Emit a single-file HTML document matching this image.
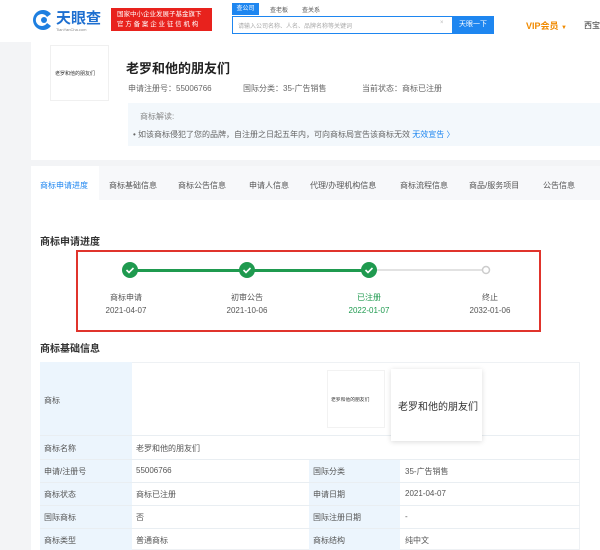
<!DOCTYPE html>
<html><head><meta charset="utf-8"><style>
*{margin:0;padding:0;box-sizing:border-box}
body{width:600px;height:550px;overflow:hidden;background:#f3f4f6;font-family:"Liberation Sans","Noto Sans CJK SC",sans-serif;color:#555;font-size:8px;position:relative}
.a{position:absolute;white-space:nowrap}
</style></head><body>
<div class="a" style="left:0;top:0;width:600px;height:42px;background:#fff"></div>
<svg class="a" style="left:31px;top:8px" width="24" height="24" viewBox="0 0 24 24"><path d="M20 6A10 10 0 1 0 20 18L16 15A6 6 0 1 1 16 9Z" fill="#1e7fe0"/><circle cx="13" cy="12" r="3" fill="#1e7fe0"/></svg>
<div class="a" style="left:56px;top:7px;font-size:15px;font-weight:bold;color:#1e6fd0">天眼查</div>
<div class="a" style="left:56px;top:27px;font-size:4px;color:#888">TianYanCha.com</div>
<div class="a" style="left:111px;top:8px;width:101px;height:23px;background:#e8221d;color:#fff;font-size:6.5px;padding:2px 6px;line-height:10px">国家中小企业发展子基金旗下<br>官 方 备 案 企 业 征 信 机 构</div>
<div class="a" style="left:232px;top:3px;width:27px;height:12px;background:#1e86f0;color:#fff;font-size:6px;text-align:center;line-height:12px">查公司</div>
<div class="a" style="left:270px;top:5px;font-size:6px;color:#555">查老板</div>
<div class="a" style="left:302px;top:5px;font-size:6px;color:#555">查关系</div>
<div class="a" style="left:232px;top:16px;width:262px;height:18px;border:1px solid #1e86f0;background:#fff"></div>
<div class="a" style="left:238px;top:21px;font-size:6px;color:#aaa">请输入公司名称、人名、品牌名称等关键词</div>
<div class="a" style="left:440px;top:20px;font-size:6px;color:#bbb">×</div>
<div class="a" style="left:452px;top:16px;width:42px;height:18px;background:#1e86f0;color:#fff;font-size:7px;text-align:center;line-height:18px">天眼一下</div>
<div class="a" style="left:526px;top:19px;font-size:9px;font-weight:bold;color:#f08a00">VIP会员 <span style="font-size:6px">▼</span></div>
<div class="a" style="left:584px;top:20px;font-size:8px;color:#333">西宝</div>

<div class="a" style="left:31px;top:42px;width:569px;height:118px;background:#fff"></div>
<div class="a" style="left:50px;top:45px;width:59px;height:56px;border:1px solid #f0f0f0"></div>
<div class="a" style="left:55px;top:70px;font-size:5px;color:#333">老罗和他的朋友们</div>
<div class="a" style="left:126px;top:58px;font-size:13px;font-weight:bold;color:#222">老罗和他的朋友们</div>
<div class="a" style="left:128px;top:83px;color:#666">申请注册号：55006766</div>
<div class="a" style="left:243px;top:83px;color:#666">国际分类：35-广告销售</div>
<div class="a" style="left:362px;top:83px;color:#666">当前状态：商标已注册</div>
<div class="a" style="left:128px;top:103px;width:472px;height:43px;background:#f3f8fc"></div>
<div class="a" style="left:140px;top:111px;color:#888">商标解读:</div>
<div class="a" style="left:133px;top:129px;color:#666">• 如该商标侵犯了您的品牌，自注册之日起五年内，可向商标局宣告该商标无效 <span style="color:#1e86f0">无效宣告 〉</span></div>

<div class="a" style="left:31px;top:166px;width:569px;height:384px;background:#fff"></div>
<div class="a" style="left:31px;top:166px;width:569px;height:34px;background:#f7f8fa"></div>
<div class="a" style="left:31px;top:166px;width:68px;height:34px;background:#fff"></div>
<div class="a" style="top:180px;left:40px;color:#1e86f0">商标申请进度</div>
<div class="a" style="top:180px;left:109px">商标基础信息</div>
<div class="a" style="top:180px;left:178px">商标公告信息</div>
<div class="a" style="top:180px;left:249px">申请人信息</div>
<div class="a" style="top:180px;left:310px">代理/办理机构信息</div>
<div class="a" style="top:180px;left:400px">商标流程信息</div>
<div class="a" style="top:180px;left:469px">商品/服务项目</div>
<div class="a" style="top:180px;left:543px">公告信息</div>

<div class="a" style="left:40px;top:233px;font-size:10px;font-weight:bold;color:#333">商标申请进度</div>
<div class="a" style="left:76px;top:250px;width:465px;height:82px;border:2px solid #e0342c"></div>
<div class="a" style="left:130px;top:269px;width:239px;height:3px;background:#1f9a4f"></div>
<div class="a" style="left:369px;top:269px;width:117px;height:2px;background:#e2e2e2"></div>
<svg class="a" style="left:0;top:0" width="600" height="550">
<g fill="#1f9a4f"><circle cx="130" cy="270" r="8"/><circle cx="247" cy="270" r="8"/><circle cx="369" cy="270" r="8"/></g>
<g fill="none" stroke="#fff" stroke-width="1.6"><path d="M126.5 270l2.5 2.5 4.5-4.5"/><path d="M243.5 270l2.5 2.5 4.5-4.5"/><path d="M365.5 270l2.5 2.5 4.5-4.5"/></g>
<circle cx="486" cy="270" r="3.5" fill="#fff" stroke="#ccc" stroke-width="1.5"/>
</svg>
<div class="a" style="left:96px;top:291px;width:60px;text-align:center;line-height:13px">商标申请<br>2021-04-07</div>
<div class="a" style="left:217px;top:291px;width:60px;text-align:center;line-height:13px">初审公告<br>2021-10-06</div>
<div class="a" style="left:339px;top:291px;width:60px;text-align:center;line-height:13px;color:#1f9a4f">已注册<br>2022-01-07</div>
<div class="a" style="left:460px;top:291px;width:60px;text-align:center;line-height:13px">终止<br>2032-01-06</div>

<div class="a" style="left:40px;top:340px;font-size:10px;font-weight:bold;color:#333">商标基础信息</div>
<div class="a" style="left:40px;top:362px;width:540px;height:188px;border:1px solid #eef1f4;background:#fff"></div>
<div class="a" style="left:40px;top:362px;width:92px;height:188px;background:#ecf5fd"></div>
<div class="a" style="left:309px;top:459px;width:91px;height:91px;background:#ecf5fd"></div>
<div class="a" style="left:40px;top:435px;width:540px;border-top:1px solid #e9eef2"></div>
<div class="a" style="left:40px;top:459px;width:540px;border-top:1px solid #e9eef2"></div>
<div class="a" style="left:40px;top:482px;width:540px;border-top:1px solid #e9eef2"></div>
<div class="a" style="left:40px;top:505px;width:540px;border-top:1px solid #e9eef2"></div>
<div class="a" style="left:40px;top:528px;width:540px;border-top:1px solid #e9eef2"></div>
<div class="a" style="left:44px;top:395px">商标</div>
<div class="a" style="left:327px;top:370px;width:58px;height:58px;border:1px solid #f2f2f2;background:#fff"></div>
<div class="a" style="left:331px;top:396px;font-size:4.8px;color:#333">老罗和他的朋友们</div>
<div class="a" style="left:391px;top:369px;width:91px;height:72px;background:#fff;box-shadow:0 1px 5px rgba(0,0,0,.15)"></div>
<div class="a" style="left:398px;top:398px;font-size:10px;color:#333">老罗和他的朋友们</div>
<div class="a" style="left:44px;top:443px">商标名称</div><div class="a" style="left:136px;top:443px">老罗和他的朋友们</div>
<div class="a" style="left:44px;top:466px">申请/注册号</div><div class="a" style="left:136px;top:466px">55006766</div><div class="a" style="left:313px;top:466px">国际分类</div><div class="a" style="left:405px;top:466px">35-广告销售</div>
<div class="a" style="left:44px;top:489px">商标状态</div><div class="a" style="left:136px;top:489px">商标已注册</div><div class="a" style="left:313px;top:489px">申请日期</div><div class="a" style="left:405px;top:489px">2021-04-07</div>
<div class="a" style="left:44px;top:512px">国际商标</div><div class="a" style="left:136px;top:512px">否</div><div class="a" style="left:313px;top:512px">国际注册日期</div><div class="a" style="left:405px;top:512px">-</div>
<div class="a" style="left:44px;top:535px">商标类型</div><div class="a" style="left:136px;top:535px">普通商标</div><div class="a" style="left:313px;top:535px">商标结构</div><div class="a" style="left:405px;top:535px">纯中文</div>
</body></html>
